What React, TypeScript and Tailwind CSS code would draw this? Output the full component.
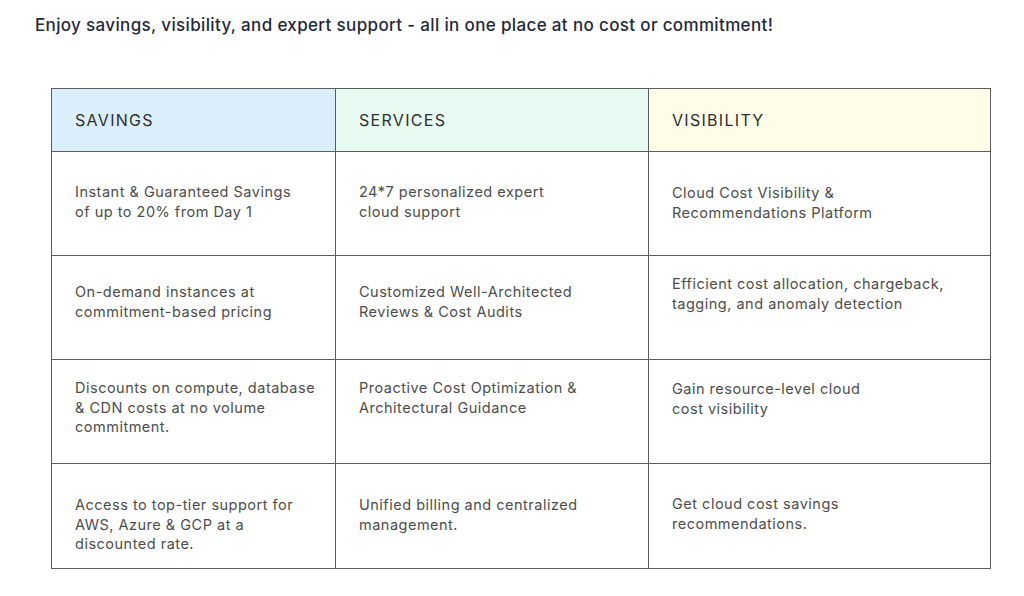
const headers = [
  { label: "SAVINGS", bg: "bg-[#dbeefc]" },
  { label: "SERVICES", bg: "bg-[#e7fbf2]" },
  { label: "VISIBILITY", bg: "bg-[#fffde8]" },
];

// each cell carries its own top padding, the source table isn't consistent
const rows = [
  {
    h: "h-[103px]",
    cells: [
      { text: ["Instant & Guaranteed Savings", "of up to 20% from Day 1"], pt: "pt-[30px]" },
      { text: ["24*7 personalized expert", "cloud support"], pt: "pt-[30px]" },
      { text: ["Cloud Cost Visibility &", "Recommendations Platform"], pt: "pt-[31px]" },
    ],
  },
  {
    h: "h-[103px]",
    cells: [
      { text: ["On-demand instances at", "commitment-based pricing"], pt: "pt-[26px]" },
      { text: ["Customized Well-Architected", "Reviews & Cost Audits"], pt: "pt-[26px]" },
      { text: ["Efficient cost allocation, chargeback,", "tagging, and anomaly detection"], pt: "pt-[18px]" },
    ],
  },
  {
    h: "h-[103px]",
    cells: [
      { text: ["Discounts on compute, database", "& CDN costs at no volume", "commitment."], pt: "pt-[18px]" },
      { text: ["Proactive Cost Optimization &", "Architectural Guidance"], pt: "pt-[18px]" },
      { text: ["Gain resource-level cloud", "cost visibility"], pt: "pt-[19px]" },
    ],
  },
  {
    h: "h-[104px]",
    cells: [
      { text: ["Access to top-tier support for", "AWS, Azure & GCP at a", "discounted rate."], pt: "pt-[31px]" },
      { text: ["Unified billing and centralized", "management."], pt: "pt-[31px]" },
      { text: ["Get cloud cost savings", "recommendations."], pt: "pt-[30px]" },
    ],
  },
];

export default function App() {
  return (
    <div
      className="w-[1024px] h-[596px] bg-white overflow-hidden"
      style={{ fontFamily: "Inter, 'Liberation Sans', sans-serif" }}
    >
      {/* Heading */}
      <h1 className="pl-[35px] pt-[14px] text-[17px] leading-[22px] font-medium text-[#1f2a3c] tracking-[0.35px] whitespace-nowrap">
        Enjoy savings, visibility, and expert support - all in one place at no cost or commitment!
      </h1>

      {/* Comparison table */}
      <div className="ml-[51px] mt-[52px] w-[940px] grid grid-cols-[283px_312px_341px] gap-px p-px bg-[#5c5c5c]">
        {headers.map((hd) => (
          <div key={hd.label} className={`${hd.bg} h-[62px] flex items-center pl-[23px] text-[16px] text-[#2f2f2f] tracking-[1.3px]`}>
            {hd.label}
          </div>
        ))}
        {rows.map((row, i) =>
          row.cells.map((cell, j) => (
            <div key={`${i}-${j}`} className={`bg-white ${row.h} ${cell.pt} pl-[23px] text-[14.5px] leading-[19.5px] text-[#4d4d4d] tracking-[0.5px] whitespace-nowrap`}>
              {cell.text.map((line) => (
                <div key={line}>{line}</div>
              ))}
            </div>
          ))
        )}
      </div>
    </div>
  );
}
